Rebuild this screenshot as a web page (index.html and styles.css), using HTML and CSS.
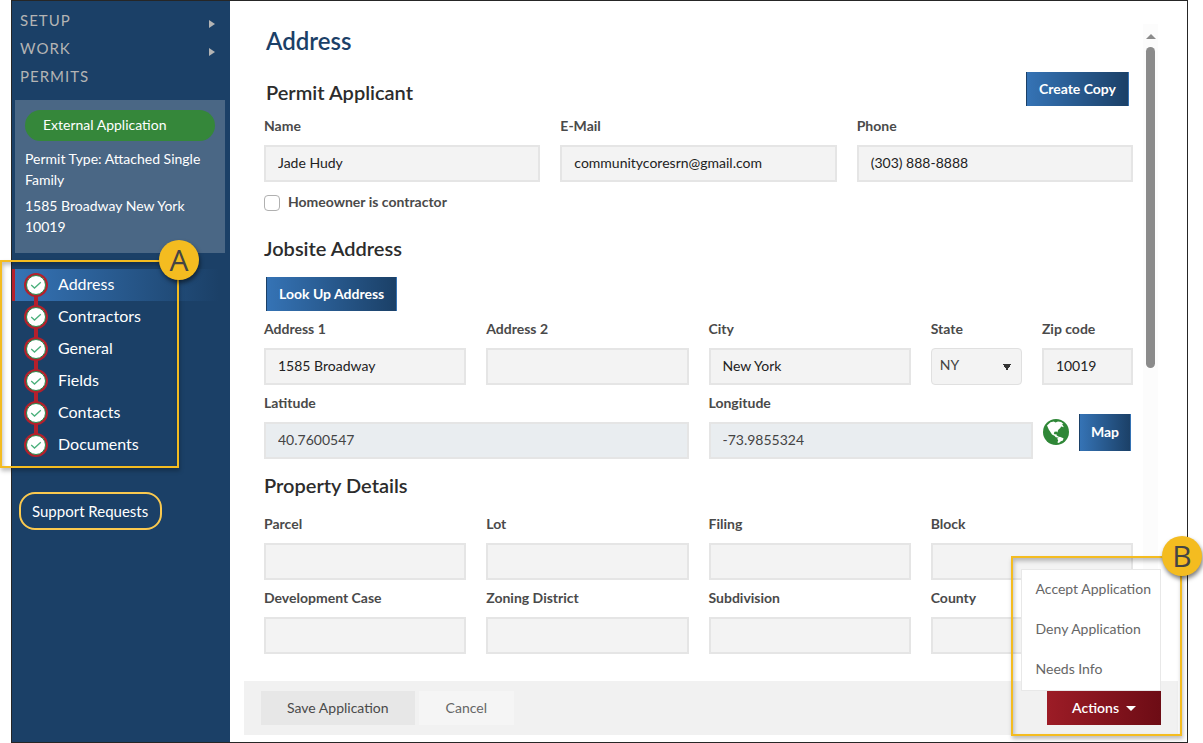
FILE: index.html
```html
<!DOCTYPE html>
<html lang="en">
<head>
<meta charset="utf-8">
<title>Permit Application</title>
<link rel="stylesheet" href="styles.css">
</head>
<body>
<svg class="defs" aria-hidden="true">
  <symbol id="check" viewBox="0 0 24 24">
    <circle cx="12" cy="12" r="12" fill="#b4202c"/>
    <circle cx="12" cy="12" r="9.500" fill="#fff" stroke="#22904f" stroke-width="1"/>
    <path d="M7.200 12l3.300 3 6.300-5.800" fill="none" stroke="#4bb07c" stroke-width="1.300"/>
  </symbol>
</svg>
<div class="app">
  <aside class="sidebar">
    <nav class="main-menu" aria-label="Main">
      <a class="main-link" href="#setup">SETUP<span class="arrow"></span></a>
      <a class="main-link" href="#work">WORK<span class="arrow"></span></a>
      <a class="main-link" href="#permits">PERMITS</a>
    </nav>
    <section class="summary">
      <div class="pill">External Application</div>
      <p class="summary-text">Permit Type: Attached Single Family</p>
      <p class="summary-text">1585 Broadway New York 10019</p>
    </section>
    <nav class="steps" aria-label="Application steps">
      <a class="step step-active" href="#address"><svg class="step-icon"><use href="#check"/></svg><span class="step-name">Address</span></a>
      <a class="step" href="#contractors"><svg class="step-icon"><use href="#check"/></svg><span class="step-name">Contractors</span></a>
      <a class="step" href="#general"><svg class="step-icon"><use href="#check"/></svg><span class="step-name">General</span></a>
      <a class="step" href="#fields"><svg class="step-icon"><use href="#check"/></svg><span class="step-name">Fields</span></a>
      <a class="step" href="#contacts"><svg class="step-icon"><use href="#check"/></svg><span class="step-name">Contacts</span></a>
      <a class="step" href="#documents"><svg class="step-icon"><use href="#check"/></svg><span class="step-name">Documents</span></a>
      <div class="callout callout-a"><span class="badge">A</span></div>
    </nav>
    <button class="support" type="button">Support Requests</button>
  </aside>
  <main class="main">
    <div class="scroll-area">
      <form class="form" id="permit">
        <h1 class="title">Address</h1>
        <div class="head-row">
          <h2 class="heading heading-first">Permit Applicant</h2>
          <button class="btn btn-copy" type="button">Create Copy</button>
        </div>
        <div class="grid-3">
          <label class="field">Name<input class="input" type="text" value="Jade Hudy"></label>
          <label class="field">E-Mail<input class="input" type="email" value="communitycoresrn@gmail.com"></label>
          <label class="field">Phone<input class="input" type="tel" value="(303) 888-8888"></label>
        </div>
        <label class="check-row"><input class="checkbox" type="checkbox"><span class="check-text">Homeowner is contractor</span></label>
        <h2 class="heading heading-jobsite">Jobsite Address</h2>
        <button class="btn btn-lookup" type="button">Look Up Address</button>
        <div class="grid-8">
          <label class="field span-2">Address 1<input class="input" type="text" value="1585 Broadway"></label>
          <label class="field span-2">Address 2<input class="input" type="text"></label>
          <label class="field span-2">City<input class="input" type="text" value="New York"></label>
          <label class="field">State<select class="input select"><option>NY</option></select></label>
          <label class="field">Zip code<input class="input" type="text" value="10019"></label>
          <label class="field span-4">Latitude<input class="input input-readonly" type="text" value="40.7600547" readonly></label>
          <div class="coord span-4">
            <label class="field coord-field">Longitude<input class="input input-readonly" type="text" value="-73.9855324" readonly></label>
            <svg class="globe" viewBox="0 0 26 26" role="img" aria-label="Globe">
              <circle cx="13" cy="13" r="13" fill="#2f8737"/>
              <path fill="#fff" d="M4 6.500l3.500-3.300 3.300-.7 1.700.9 2.500-1 3.200.7 2.200 2-1.600.4 1 .8 1 1.900-1.600-.4-1.200-.4-.6 1.600-1.600 1.200-1 1.600-.3 1.600-1-1-2 .4-.7 1.700 1.200.9 1.300-.5.400 1.500 2.200 1.400-.7.800-2.400-.3-1.300-1.500-2.500-1.200-1.600-2.600-1.500-2.200z"/>
              <path fill="#fff" d="M14.800 18.400l2-.7 3.700 1.600-.6 2.200-2 .7-2 1.800-1.500-.4.800-2.400-.9-1.300z"/>
            </svg>
            <button class="btn btn-map" type="button">Map</button>
          </div>
        </div>
        <h2 class="heading heading-property">Property Details</h2>
        <div class="grid-8">
          <label class="field span-2">Parcel<input class="input" type="text"></label>
          <label class="field span-2">Lot<input class="input" type="text"></label>
          <label class="field span-2">Filing<input class="input" type="text"></label>
          <label class="field span-2">Block<input class="input" type="text"></label>
          <label class="field span-2">Development Case<input class="input" type="text"></label>
          <label class="field span-2">Zoning District<input class="input" type="text"></label>
          <label class="field span-2">Subdivision<input class="input" type="text"></label>
          <label class="field span-2">County<input class="input" type="text"></label>
        </div>
      </form>
      <div class="scrollbar"><span class="scroll-up"></span><span class="scroll-thumb"></span></div>
    </div>
    <footer class="footer">
      <button class="footer-btn save" type="submit" form="permit">Save Application</button>
      <button class="footer-btn cancel" type="button">Cancel</button>
      <div class="actions">
        <div class="menu">
          <a class="menu-item" href="#accept">Accept Application</a>
          <a class="menu-item" href="#deny">Deny Application</a>
          <a class="menu-item" href="#info">Needs Info</a>
        </div>
        <button class="actions-btn" type="button">Actions<span class="caret"></span></button>
        <div class="callout callout-b"><span class="badge">B</span></div>
      </div>
    </footer>
  </main>
</div>
</body>
</html>
```
FILE: styles.css
```css
* { box-sizing: border-box; }
body {
  margin: 0;
  background: #fff;
  color: #4a4a4a;
  font-family: Lato, "Open Sans", sans-serif;
  font-size: 14px;
  line-height: 21px;
}
h1, h2, p { margin: 0; }
a { color: inherit; text-decoration: none; }
button, input, select { font: inherit; }
button { padding: 0; border: 0; cursor: pointer; }
.defs { position: absolute; width: 0; height: 0; }

.app {
  display: flex;
  min-height: 100vh;
  margin: 0 15px 0 11px;
  border: 1px solid #262626;
}

/* Sidebar */
.sidebar {
  flex: none;
  width: 218px;
  padding-top: 6px;
  background: #1b4067;
  color: #fff;
}
.main-menu { padding: 0 15px 0 8px; }
.main-link {
  display: flex;
  align-items: center;
  justify-content: space-between;
  height: 28px;
  padding-bottom: 2px;
  color: #b4b4b4;
  font-size: 15px;
  letter-spacing: 1px;
}
.arrow {
  margin-top: 8px;
  border: 4px solid transparent;
  border-left: 6px solid #b4b4b4;
  border-right: 0;
}
.summary {
  display: grid;
  gap: 5px;
  margin: 9px 5px 16px 3px;
  padding: 10px 10px 16px;
  background: #4a6785;
}
.pill {
  margin-bottom: 2px;
  padding: 4px 18px 6px;
  border-radius: 16px;
  background: #35873a;
}
.steps { position: relative; }
.step {
  position: relative;
  display: flex;
  align-items: center;
  gap: 10px;
  height: 32px;
  padding-left: 12px;
  font-size: 16px;
}
.step-name { padding-bottom: 3px; }
.step-active {
  padding-left: 9px;
  border-left: 3px solid #b4202c;
  background: linear-gradient(90deg, #3573b5, #1b4067 95%);
}
.step-icon { z-index: 1; width: 24px; height: 24px; }
.step:not(.step-active)::before {
  content: "";
  position: absolute;
  left: 22px;
  top: -8px;
  width: 4px;
  height: 16px;
  background: #b4202c;
}
.support {
  display: block;
  margin: 31px 0 0 7px;
  padding: 7px 12px 6px 11px;
  border: 2px solid #fac94f;
  border-radius: 16px;
  background: none;
  color: #fff;
  font-size: 15px;
}

/* Callouts */
.callout {
  position: absolute;
  z-index: 3;
  border: 2px solid #f4bc20;
  box-shadow: 1px 3px 4px rgba(0, 0, 0, .25), inset 1px 3px 4px rgba(0, 0, 0, .25);
  pointer-events: none;
}
.callout-a { left: -12px; right: 51px; top: -9px; bottom: -7px; }
.callout-b { width: 171px; right: -21px; top: -135px; bottom: -11px; }
.badge {
  position: absolute;
  top: -22px;
  right: -22px;
  width: 40px;
  height: 40px;
  border-radius: 50%;
  background: #f4bc20;
  box-shadow: 1px 3px 4px rgba(0, 0, 0, .5);
  color: #444;
  font: 30px/40px "Open Sans", sans-serif;
  text-align: center;
}

/* Form */
.main {
  display: flex;
  flex: 1;
  flex-direction: column;
  min-width: 0;
  padding: 23px 9px 7px 14px;
}
.scroll-area { display: flex; flex: 1; margin-right: 20px; }
.form { flex: 1; min-width: 0; padding: 0 10px 27px 20px; }
.title {
  margin: 1px 0 16px 2px;
  color: #1b4067;
  font-size: 24px;
  font-weight: 600;
  line-height: 31px;
}
.head-row { display: flex; align-items: flex-end; justify-content: space-between; margin-bottom: 10px; }
.heading { color: #2c2c2c; font-size: 20px; font-weight: 600; line-height: 24px; }
.heading-first { margin: 0 0 2px 2px; }
.heading-jobsite { margin: 20px 0 17px; }
.heading-property { margin: 14px 0 17px; }
.grid-3, .grid-8 { display: grid; gap: 8px 20px; }
.grid-3 { grid-template-columns: repeat(3, minmax(0, 1fr)); }
.grid-8 { grid-template-columns: repeat(8, minmax(0, 1fr)); }
.span-2 { grid-column: span 2; }
.span-4 { grid-column: span 4; }
.field { display: flex; flex-direction: column; gap: 10px; font-weight: 700; line-height: 19px; }
.input {
  width: 100%;
  height: 37px;
  padding: 0 12px 2px;
  border: 2px solid #e5e5e5;
  border-radius: 0;
  background: #f3f3f3;
  color: #222;
  font-weight: 400;
}
.input-readonly { background: #e9edf0; color: #444; }
.select {
  appearance: none;
  padding: 0 8px 4px;
  border: 1px solid #e0e0e0;
  border-radius: 4px;
  background-color: #f3f3f3;
  background-image: linear-gradient(to bottom left, #333 50%, transparent 50%), linear-gradient(to bottom right, #333 50%, transparent 50%);
  background-position: right 14px top 15px, right 10px top 15px;
  background-repeat: no-repeat;
  background-size: 4px 7px;
  color: #444;
}
.coord { display: flex; align-items: flex-end; gap: 10px; }
.coord-field { flex: 1; }
.globe { flex: none; width: 26px; height: 26px; margin-bottom: 14px; }
.check-row { display: flex; align-items: center; gap: 8px; height: 26px; margin-top: 8px; font-weight: 700; }
.check-text { padding-bottom: 3px; }
.checkbox {
  appearance: none;
  width: 16px;
  height: 16px;
  margin: 0;
  border: 1px solid #b0b0b0;
  border-radius: 4px;
  background: #fff;
}
.btn {
  height: 34px;
  padding: 0 12px 2px;
  border: 1px solid transparent;
  border-width: 0 1px;
  background: linear-gradient(90deg, #3573b5, #1b4067);
  color: #fff;
  font-weight: 700;
}
.btn-copy { margin-right: 4px; }
.btn-lookup { display: block; margin: 0 0 8px 2px; }
.btn-map { height: 37px; margin: 0 2px 8px 0; padding: 0 11px 2px; }

/* Scrollbar */
.scrollbar { width: 15px; padding: 10px 3px; background: #fcfcfc; }
.scroll-up { display: block; width: 0; border: 5px solid transparent; border-top: 0; border-bottom-color: #8b8b8b; }
.scroll-thumb { display: block; width: 9px; height: 321px; margin-top: 8px; border-radius: 5px; background: #8b8b8b; }

/* Footer */
.footer { display: flex; gap: 4px; padding: 10px 17px; background: #f1f1f1; }
.footer-btn { height: 34px; padding: 0 26px 2px; color: #4a4a4a; }
.save { background: #e7e7e7; }
.cancel { padding: 0 27px 2px; background: #f5f5f5; color: #666; }
.actions { position: relative; margin-left: auto; }
.actions-btn {
  display: flex;
  align-items: center;
  gap: 7px;
  height: 34px;
  padding: 0 25px 2px;
  background: linear-gradient(90deg, #9c1c26, #6d0c15);
  color: #fff;
  font-weight: 600;
}
.caret { margin-top: 2px; border: 5px solid transparent; border-top-color: #fff; border-bottom: 0; }
.menu {
  position: absolute;
  z-index: 2;
  right: 0;
  bottom: 34px;
  border: 1px solid #e8e8e8;
  background: #fff;
}
.menu-item { display: block; padding: 8px 9px 11px 14px; height: 40px; color: #666; white-space: nowrap; }
```
